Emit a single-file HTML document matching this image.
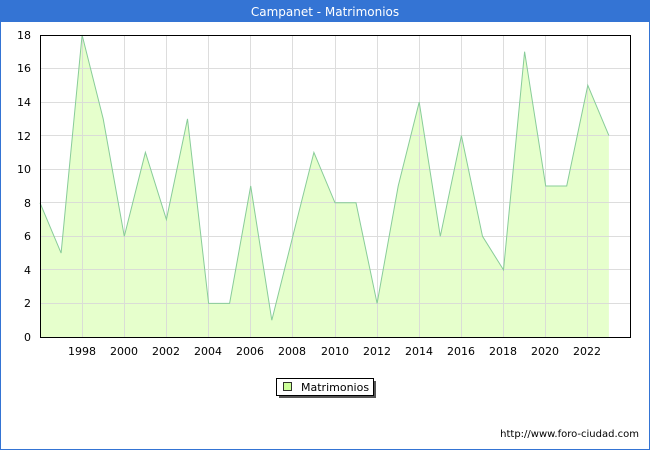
<!DOCTYPE html>
<html><head><style>
body{margin:0;width:650px;height:450px;overflow:hidden;background:#fff;font-family:"DejaVu Sans","Liberation Sans",sans-serif}
</style></head><body>
<svg width="650" height="450" xmlns="http://www.w3.org/2000/svg" font-family="DejaVu Sans, Liberation Sans, sans-serif">
<rect x="0.5" y="0.5" width="649" height="449" fill="#fff" stroke="#3474d4"/>
<rect x="0" y="0" width="650" height="22" fill="#3474d4"/>
<text x="325" y="16" fill="#fff" font-size="12" text-anchor="middle">Campanet - Matrimonios</text>
<polygon fill="#e6ffcc" stroke="none" points="40,337 40,202.8 61.1,253.1 82.1,35 103.2,118.9 124.3,236.3 145.4,152.4 166.4,219.5 187.5,118.9 208.6,303.4 229.6,303.4 250.7,186 271.8,320.2 292.8,236.3 313.9,152.4 335,202.8 356,202.8 377.1,303.4 398.2,186 419.2,102.1 440.3,236.3 461.4,135.6 482.5,236.3 503.5,269.9 524.6,51.7 545.7,186 566.7,186 587.8,85.3 608.9,135.6 608.9,337"/>
<g stroke="#d8d8d8" stroke-width="1" opacity="0.85">
<line x1="40" y1="303.5" x2="630" y2="303.5"/><line x1="40" y1="269.5" x2="630" y2="269.5"/><line x1="40" y1="236.5" x2="630" y2="236.5"/><line x1="40" y1="202.5" x2="630" y2="202.5"/><line x1="40" y1="169.5" x2="630" y2="169.5"/><line x1="40" y1="135.5" x2="630" y2="135.5"/><line x1="40" y1="102.5" x2="630" y2="102.5"/><line x1="40" y1="68.5" x2="630" y2="68.5"/>
<line x1="82.5" y1="35" x2="82.5" y2="337"/><line x1="124.5" y1="35" x2="124.5" y2="337"/><line x1="166.5" y1="35" x2="166.5" y2="337"/><line x1="208.5" y1="35" x2="208.5" y2="337"/><line x1="250.5" y1="35" x2="250.5" y2="337"/><line x1="292.5" y1="35" x2="292.5" y2="337"/><line x1="335.5" y1="35" x2="335.5" y2="337"/><line x1="377.5" y1="35" x2="377.5" y2="337"/><line x1="419.5" y1="35" x2="419.5" y2="337"/><line x1="461.5" y1="35" x2="461.5" y2="337"/><line x1="503.5" y1="35" x2="503.5" y2="337"/><line x1="545.5" y1="35" x2="545.5" y2="337"/><line x1="587.5" y1="35" x2="587.5" y2="337"/>
</g>
<polyline fill="none" stroke="#88cc99" stroke-width="1" points="40,202.8 61.1,253.1 82.1,35 103.2,118.9 124.3,236.3 145.4,152.4 166.4,219.5 187.5,118.9 208.6,303.4 229.6,303.4 250.7,186 271.8,320.2 292.8,236.3 313.9,152.4 335,202.8 356,202.8 377.1,303.4 398.2,186 419.2,102.1 440.3,236.3 461.4,135.6 482.5,236.3 503.5,269.9 524.6,51.7 545.7,186 566.7,186 587.8,85.3 608.9,135.6"/>
<rect x="40.5" y="35.5" width="590" height="302" fill="none" stroke="#000"/>
<g font-size="11" fill="#000" text-anchor="end">
<text x="31" y="341">0</text><text x="31" y="307">2</text><text x="31" y="274">4</text><text x="31" y="240">6</text><text x="31" y="207">8</text><text x="31" y="173">10</text><text x="31" y="140">12</text><text x="31" y="106">14</text><text x="31" y="72">16</text><text x="31" y="39">18</text>
</g>
<g font-size="11" fill="#000" text-anchor="middle">
<text x="82" y="355">1998</text><text x="124" y="355">2000</text><text x="166" y="355">2002</text><text x="208" y="355">2004</text><text x="250" y="355">2006</text><text x="292" y="355">2008</text><text x="335" y="355">2010</text><text x="377" y="355">2012</text><text x="419" y="355">2014</text><text x="461" y="355">2016</text><text x="503" y="355">2018</text><text x="545" y="355">2020</text><text x="587" y="355">2022</text>
</g>
<rect x="279" y="381" width="97" height="17" fill="#555"/>
<rect x="276.5" y="378.5" width="97" height="17" fill="#fff" stroke="#000"/>
<rect x="283.5" y="382.5" width="8" height="8" fill="#ccff99" stroke="#000" stroke-width="0.8"/>
<text x="301" y="391" font-size="11">Matrimonios</text>
<text x="639" y="437" font-size="10" text-anchor="end">http://www.foro-ciudad.com</text>
</svg>
</body></html>
